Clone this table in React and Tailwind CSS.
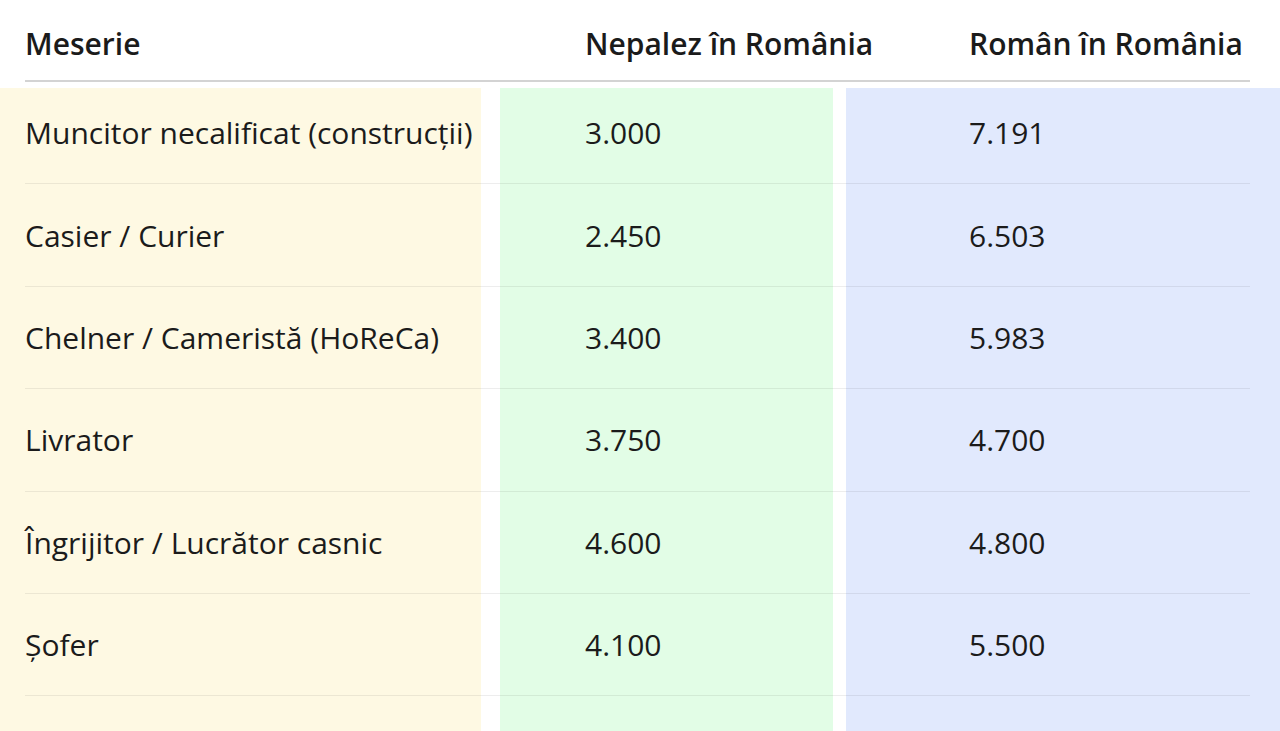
import React from 'react';

const rows = [
  { job: 'Muncitor necalificat (construcții)', nepal: '3.000', ro: '7.191' },
  { job: 'Casier / Curier', nepal: '2.450', ro: '6.503' },
  { job: 'Chelner / Cameristă (HoReCa)', nepal: '3.400', ro: '5.983' },
  { job: 'Livrator', nepal: '3.750', ro: '4.700' },
  { job: 'Îngrijitor / Lucrător casnic', nepal: '4.600', ro: '4.800' },
  { job: 'Șofer', nepal: '4.100', ro: '5.500' },
];

const App = () => {
  return (
    <div
      className="h-[731px] w-[1280px] overflow-hidden bg-white flex flex-col text-[#1b1b1b]"
      style={{ fontFamily: '"Open Sans", "Noto Sans", sans-serif' }}
    >
      {/* Header */}
      <div className="flex items-center h-[82px] mx-[25px] w-[1225px] border-b-2 border-[#d3d3d3] text-[30px] font-semibold pt-[7px]">
        <div className="w-[560px]">Meserie</div>
        <div className="w-[384px]">Nepalez în România</div>
        <div className="whitespace-nowrap">Român în România</div>
      </div>

      {/* Body */}
      <div className="grid flex-1">
        {/* Background bands */}
        <div className="[grid-area:1/1] flex pt-[6px]">
          <div className="w-[481px] bg-[#fef9e3]" />
          <div className="w-[19px]" />
          <div className="w-[333px] bg-[#e2fde6]" />
          <div className="w-[13px]" />
          <div className="flex-1 bg-[#e1e9fd]" />
        </div>

        {/* Rows */}
        <div className="[grid-area:1/1] flex flex-col text-[30px]">
          {rows.map((r) => (
            <div
              key={r.job}
              className="flex items-center h-[102.4px] mx-[25px] w-[1225px] border-b border-black/[0.07]"
            >
              <div className="w-[560px] whitespace-nowrap">{r.job}</div>
              <div className="w-[384px]">{r.nepal}</div>
              <div>{r.ro}</div>
            </div>
          ))}
        </div>
      </div>
    </div>
  );
};

export default App;
